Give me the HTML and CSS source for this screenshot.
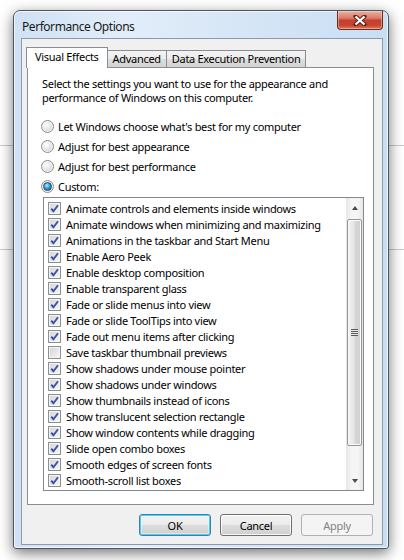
FILE: index.html
```html
<!DOCTYPE html>
<html>
<head>
<meta charset="utf-8">
<link rel="stylesheet" href="styles.css">
</head>
<body>
<div class="window">
  <div class="titlebar">
    <span class="title">Performance Options</span>
    <div class="close">
      <svg width="14" height="11" viewBox="0 0 14 11"><path d="M2.5 1.5 L11.5 9.5 M11.5 1.5 L2.5 9.5" stroke="#5a2418" stroke-width="4.2" stroke-linecap="round" fill="none"/><path d="M2.5 1.5 L11.5 9.5 M11.5 1.5 L2.5 9.5" stroke="#ffffff" stroke-width="2.2" stroke-linecap="butt" fill="none"/></svg>
    </div>
  </div>
  <div class="client">
    <div class="tabs">
      <div class="tab active">Visual Effects</div>
      <div class="tab">Advanced</div>
      <div class="tab">Data Execution Prevention</div>
    </div>
    <div class="panel">
      <p class="intro">Select the settings you want to use for the appearance and<br>performance of Windows on this computer.</p>
      <div class="radios">
        <div class="radio-row"><span class="radio"></span>Let Windows choose what's best for my computer</div>
        <div class="radio-row"><span class="radio"></span>Adjust for best appearance</div>
        <div class="radio-row"><span class="radio"></span>Adjust for best performance</div>
        <div class="radio-row"><span class="radio on"></span>Custom:</div>
      </div>
      <div class="listbox">
        <div class="items">
          <div class="item"><span class="cb on"></span>Animate controls and elements inside windows</div>
          <div class="item"><span class="cb on"></span>Animate windows when minimizing and maximizing</div>
          <div class="item"><span class="cb on"></span>Animations in the taskbar and Start Menu</div>
          <div class="item"><span class="cb on"></span>Enable Aero Peek</div>
          <div class="item"><span class="cb on"></span>Enable desktop composition</div>
          <div class="item"><span class="cb on"></span>Enable transparent glass</div>
          <div class="item"><span class="cb on"></span>Fade or slide menus into view</div>
          <div class="item"><span class="cb on"></span>Fade or slide ToolTips into view</div>
          <div class="item"><span class="cb on"></span>Fade out menu items after clicking</div>
          <div class="item"><span class="cb"></span>Save taskbar thumbnail previews</div>
          <div class="item"><span class="cb on"></span>Show shadows under mouse pointer</div>
          <div class="item"><span class="cb on"></span>Show shadows under windows</div>
          <div class="item"><span class="cb on"></span>Show thumbnails instead of icons</div>
          <div class="item"><span class="cb on"></span>Show translucent selection rectangle</div>
          <div class="item"><span class="cb on"></span>Show window contents while dragging</div>
          <div class="item"><span class="cb on"></span>Slide open combo boxes</div>
          <div class="item"><span class="cb on"></span>Smooth edges of screen fonts</div>
          <div class="item"><span class="cb on"></span>Smooth-scroll list boxes</div>
        </div>
        <div class="scrollbar">
          <div class="sb-btn"><span class="arrow up"></span></div>
          <div class="thumb"><span class="grip"></span></div>
          <div class="sb-space"></div>
          <div class="sb-btn"><span class="arrow down"></span></div>
        </div>
      </div>
    </div>
    <div class="buttons">
      <div class="btn default">OK</div>
      <div class="btn">Cancel</div>
      <div class="btn disabled">Apply</div>
    </div>
  </div>
</div>
</body>
</html>
```
FILE: styles.css
```css
* { box-sizing: border-box; }
html, body { margin: 0; padding: 0; }
body {
  width: 404px;
  height: 560px;
  overflow: hidden;
  font-family: "Noto Sans", "Open Sans", sans-serif;
  font-size: 11px;
  letter-spacing: -0.3px;
  color: #000;
  background:
    linear-gradient(#c9c9c9, #c9c9c9) 0 145px / 100% 1px no-repeat,
    linear-gradient(#c9c9c9, #c9c9c9) 0 249px / 100% 1px no-repeat,
    #ffffff;
  padding-top: 10px;
  padding-left: 13px;
}
.window {
  width: 376px;
  height: 539px;
  border: 1px solid #4b5560;
  border-radius: 7px 7px 3px 3px;
  background: linear-gradient(90deg, #cfe1f4 0%, #e2edf9 30%, #d6e6f6 60%, #cadef3 100%);
  box-shadow: 0 4px 14px rgba(0,0,0,0.55), inset 0 0 0 1px rgba(255,255,255,0.7);
  display: flex;
  flex-direction: column;
}
.titlebar {
  height: 27px;
  display: flex;
  align-items: flex-start;
  padding-left: 8px;
  position: relative;
}
.title {
  font-size: 12px;
  letter-spacing: -0.45px;
  color: #1a1a1a;
  margin-top: 7px;
}
.close {
  position: absolute;
  right: 5px;
  top: 0;
  width: 46px;
  height: 19px;
  border: 1px solid #6e2a20;
  border-top: none;
  border-radius: 0 0 4px 4px;
  background: linear-gradient(#eab0a2 0%, #dc7a66 40%, #c3402e 52%, #c8442f 80%, #e07a5a 100%);
  box-shadow: inset 0 0 0 1px rgba(255,255,255,0.35);
  display: flex;
  align-items: center;
  justify-content: center;
}
.client {
  margin: 0 5px 3px 7px;
  flex: 1;
  background: #f0f0f0;
  border: 1px solid #8a9bb0;
  padding: 8px 8px 0 5px;
  display: flex;
  flex-direction: column;
}
.tabs {
  display: flex;
  align-items: flex-end;
  height: 20px;
  position: relative;
  z-index: 1;
}
.tab {
  height: 17px;
  border: 1px solid #898c95;
  border-bottom: none;
  padding: 0 5px;
  line-height: 16px;
  background: linear-gradient(#f3f3f3, #ebebeb 50%, #dedede 50%, #d3d3d3);
}
.tab.active {
  background: #fff;
  padding: 0 8px;
  margin-left: -1px;
  line-height: 17px;
  margin-bottom: -1px;
  height: 21px;
  position: relative;
  z-index: 2;
}
.tab + .tab { border-left: none; }
.panel {
  height: 438px;
  border: 1px solid #898c95;
  background: #fff;
  padding: 9px 10px 0 14px;
}
.intro {
  margin: 0;
  line-height: 14px;
}
.radios { margin-top: 11px; margin-left: -1px; }
.radio-row {
  height: 20px;
  display: flex;
  align-items: center;
}
.radio {
  width: 13px;
  height: 13px;
  border-radius: 50%;
  border: 1px solid #8c8c8c;
  background: radial-gradient(circle at 40% 35%, #ffffff 0%, #e9e9e9 40%, #c9c9c9 100%);
  box-shadow: inset 0 0 0 1px #f6f6f6;
  margin-right: 4px;
  flex: none;
  display: flex;
  align-items: center;
  justify-content: center;
}
.radio.on::after {
  content: "";
  width: 7px;
  height: 7px;
  border-radius: 50%;
  background: radial-gradient(circle at 40% 35%, #b8ecff 0%, #3aa0d8 45%, #145283 100%);
  border: 1px solid #1c4a74;
}
.listbox {
  margin-top: 1px;
  margin-left: 1px;
  width: 321px;
  height: 294px;
  border: 1px solid #828790;
  display: flex;
  padding: 1px 0 0 0;
}
.items {
  flex: 1;
  padding-top: 1px;
}
.item {
  height: 16px;
  display: flex;
  align-items: center;
  padding-left: 4px;
}
.cb {
  width: 13px;
  height: 13px;
  border: 1px solid #8f8f8f;
  background: linear-gradient(135deg, #d4d4d4, #f7f7f7);
  box-shadow: inset 0 0 0 1px #f4f4f4;
  margin-right: 5px;
  flex: none;
  display: flex;
  align-items: center;
  justify-content: center;
}
.cb.on::after {
  content: "";
  width: 9px;
  height: 9px;
  background: url("data:image/svg+xml;utf8,<svg xmlns='http://www.w3.org/2000/svg' width='9' height='9' viewBox='0 0 9 9'><path d='M1.2 4.6 L3.4 7.2 L8 1.2' stroke='%23344fa6' stroke-width='1.8' fill='none'/></svg>") no-repeat;
}
.scrollbar {
  width: 17px;
  margin-top: -1px;
  display: flex;
  flex-direction: column;
  background: linear-gradient(90deg, #e6e6e6, #f5f5f5 30%, #f5f5f5 70%, #e6e6e6);
}
.sb-btn {
  height: 19px;
  flex: none;
  display: flex;
  align-items: center;
  justify-content: center;
}
.arrow {
  width: 0; height: 0;
  border-left: 3.5px solid transparent;
  border-right: 3.5px solid transparent;
}
.arrow.up { border-bottom: 4px solid #4a4a4a; }
.arrow.down { border-top: 4px solid #4a4a4a; }
.thumb {
  height: 227px;
  margin: 2px 1px 0 1px;
  border: 1px solid #959595;
  border-radius: 2px;
  background: linear-gradient(90deg, #f2f2f2 0%, #e6e6e6 45%, #d6d6d6 55%, #cfcfcf 100%);
  box-shadow: inset 0 0 0 1px #fbfbfb;
  display: flex;
  align-items: center;
  justify-content: center;
}
.grip {
  width: 7px;
  height: 7px;
  background: repeating-linear-gradient(#5c5c5c 0 1px, #e8e8e8 1px 2px);
}
.sb-space { flex: 1; }
.buttons {
  display: flex;
  justify-content: flex-end;
  gap: 9px;
  margin-top: 9px;
  padding-right: 1px;
}
.btn {
  width: 72px;
  height: 22px;
  border: 1px solid #707070;
  border-radius: 3px;
  background: linear-gradient(#f2f2f2 0%, #ebebeb 50%, #dddddd 50%, #cfcfcf 100%);
  box-shadow: inset 0 0 0 1px rgba(255,255,255,0.8);
  display: flex;
  align-items: center;
  justify-content: center;
}
.btn.default {
  border-color: #3c7fb1;
  box-shadow: inset 0 0 0 1px #48d0f8, inset 0 0 0 2px rgba(255,255,255,0.4);
}
.btn.disabled {
  border-color: #adb2b5;
  background: #f4f4f4;
  box-shadow: none;
  color: #838383;
}
```
